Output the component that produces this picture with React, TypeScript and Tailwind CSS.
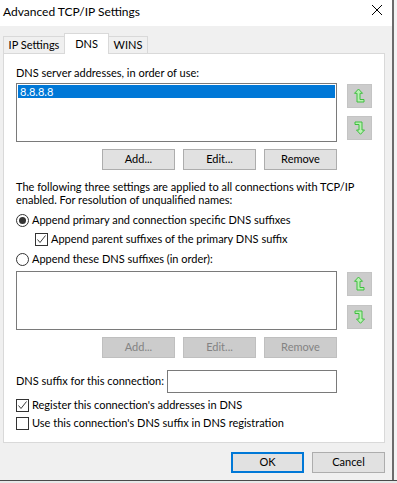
import React from "react";

const font = { fontFamily: 'Lato, "Noto Sans", sans-serif' };

function UpIcon() {
  return (
    <svg width="13" height="16" viewBox="0 0 13 16">
      <path
        d="M5.5 1 L9.5 5.3 L7 5.3 L7 11.5 L11 11.5 L11 14 L4 14 L4 5.3 L1.5 5.3 Z"
        fill="#b9f0b3"
        stroke="#3fbf3f"
        strokeWidth="1"
        strokeLinejoin="miter"
      />
    </svg>
  );
}

function DownIcon() {
  return (
    <svg width="13" height="16" viewBox="0 0 13 16">
      <path
        d="M2 2 L9 2 L9 10 L11.5 10 L7.5 14.3 L3.5 10 L6 10 L6 4.5 L2 4.5 Z"
        fill="#b9f0b3"
        stroke="#3fbf3f"
        strokeWidth="1"
        strokeLinejoin="miter"
      />
    </svg>
  );
}

function ArrowBtn({ children }: { children: React.ReactNode }) {
  return (
    <div className="w-[25px] h-[24px] bg-[#cccccc] border border-[#c4c4c4] flex items-center justify-center">
      {children}
    </div>
  );
}

function Btn({ label, disabled, focused }: { label: string; disabled?: boolean; focused?: boolean }) {
  let cls = "w-[73px] h-[21px] flex items-center justify-center text-[11px] whitespace-nowrap ";
  if (disabled) cls += "bg-[#cccccc] border border-[#bfbfbf] text-[#838383]";
  else if (focused) cls += "bg-[#e1e1e1] border-2 border-[#0078d7] text-black";
  else cls += "bg-[#e1e1e1] border border-[#adadad] text-black";
  return <div className={cls}>{label}</div>;
}

function Check({ checked }: { checked?: boolean }) {
  return (
    <div className="w-[13px] h-[13px] border border-[#333333] bg-white flex items-center justify-center shrink-0">
      {checked && (
        <svg width="11" height="11" viewBox="0 0 11 11">
          <path d="M1.5 5.5 L4 8.5 L9.5 1.5" fill="none" stroke="#3c3c3c" strokeWidth="1" />
        </svg>
      )}
    </div>
  );
}

function Radio({ checked }: { checked?: boolean }) {
  return (
    <div className="w-[13px] h-[13px] rounded-full border border-[#333333] bg-white flex items-center justify-center shrink-0">
      {checked && <div className="w-[7px] h-[7px] rounded-full bg-[#333333]" />}
    </div>
  );
}

export default function App() {
  return (
    <div className="w-[397px] h-[483px] bg-[#f0f0f0] overflow-hidden text-black whitespace-nowrap" style={font}>
      <div className="flex h-[480px]">
        <div className="w-[392px] h-[480px] flex flex-col bg-[#f0f0f0]">
          {/* Title bar */}
          <div className="h-[26px] bg-white flex items-center justify-between pl-[3px] pr-[9px]">
            <span className="text-[12px] leading-[15px] -mt-[4px]">Advanced TCP/IP Settings</span>
            <svg width="12" height="12" viewBox="0 0 12 12" className="-mt-[6px]">
              <path d="M1 1 L11 11 M11 1 L1 11" stroke="#000" strokeWidth="1" />
            </svg>
          </div>

          {/* Tabs */}
          <div className="pl-[3px] pr-[7px] mt-[7px] flex flex-col">
            <div className="flex items-end h-[20px] relative z-10">
              <div className="w-[62px] h-[17px] border border-b-0 border-[#d9d9d9] bg-[#f0f0f0] flex items-center justify-center text-[11px]">
                IP Settings
              </div>
              <div className="w-[45px] h-[21px] -mb-[1px] border border-b-0 border-[#d9d9d9] bg-white flex items-start justify-center pt-[2px] text-[11px] -ml-[1px]">
                DNS
              </div>
              <div className="w-[39px] h-[17px] border border-b-0 border-l-0 border-[#d9d9d9] bg-[#f0f0f0] flex items-center justify-center text-[11px]">
                WINS
              </div>
            </div>

            {/* Panel */}
            <div className="h-[390px] border border-[#d9d9d9] bg-white px-[12px] flex flex-col text-[11px]">
              <div className="mt-[11px] leading-[15px]">DNS server addresses, in order of use:</div>
              <div className="mt-[3px] flex gap-[10px]">
                <div className="w-[321px] h-[59px] border border-[#7a7a7a] bg-white p-[1px]">
                  <div className="h-[13px] bg-[#0078d7] text-white leading-[13px] pl-[2px]">8.8.8.8</div>
                </div>
                <div className="flex flex-col gap-[8px] mt-[1px]">
                  <ArrowBtn><UpIcon /></ArrowBtn>
                  <ArrowBtn><DownIcon /></ArrowBtn>
                </div>
              </div>
              <div className="mt-[7px] w-[321px] flex justify-end gap-[8px]">
                <Btn label="Add..." />
                <Btn label="Edit..." />
                <Btn label="Remove" />
              </div>
              <div className="mt-[10px] leading-[13px]">
                The following three settings are applied to all connections with TCP/IP
                <br />
                enabled. For resolution of unqualified names:
              </div>
              <div className="mt-[6px] h-[16px] flex items-center gap-[3px]">
                <Radio checked />
                <span>Append primary and connection specific DNS suffixes</span>
              </div>
              <div className="mt-[3px] h-[16px] flex items-center gap-[3px] pl-[19px]">
                <Check checked />
                <span>Append parent suffixes of the primary DNS suffix</span>
              </div>
              <div className="mt-[4px] h-[16px] flex items-center gap-[3px]">
                <Radio />
                <span>Append these DNS suffixes (in order):</span>
              </div>
              <div className="mt-[4px] flex gap-[10px]">
                <div className="w-[321px] h-[59px] border border-[#7a7a7a] bg-white" />
                <div className="flex flex-col gap-[9px] mt-[1px]">
                  <ArrowBtn><UpIcon /></ArrowBtn>
                  <ArrowBtn><DownIcon /></ArrowBtn>
                </div>
              </div>
              <div className="mt-[7px] w-[321px] flex justify-end gap-[8px]">
                <Btn label="Add..." disabled />
                <Btn label="Edit..." disabled />
                <Btn label="Remove" disabled />
              </div>
              <div className="mt-[12px] w-[321px] flex items-center justify-between">
                <span>DNS suffix for this connection:</span>
                <div className="w-[170px] h-[23px] border border-[#7a7a7a] bg-white" />
              </div>
              <div className="mt-[4px] h-[16px] flex items-center gap-[3px]">
                <Check checked />
                <span>Register this connection's addresses in DNS</span>
              </div>
              <div className="mt-[2px] h-[16px] flex items-center gap-[3px]">
                <Check />
                <span>Use this connection's DNS suffix in DNS registration</span>
              </div>
            </div>

            {/* Footer */}
            <div className="mt-[9px] flex justify-end gap-[8px]">
              <Btn label="OK" focused />
              <Btn label="Cancel" />
            </div>
          </div>
        </div>
        <div className="w-[2px] h-[480px] bg-[#6b6b6b]" />
        <div className="w-[3px] h-[480px] bg-[#f3f3f3]" />
      </div>
      <div className="h-[1px] bg-[#4a4a4a]" />
      <div className="h-[2px] bg-[#e8e8e8]" />
    </div>
  );
}
